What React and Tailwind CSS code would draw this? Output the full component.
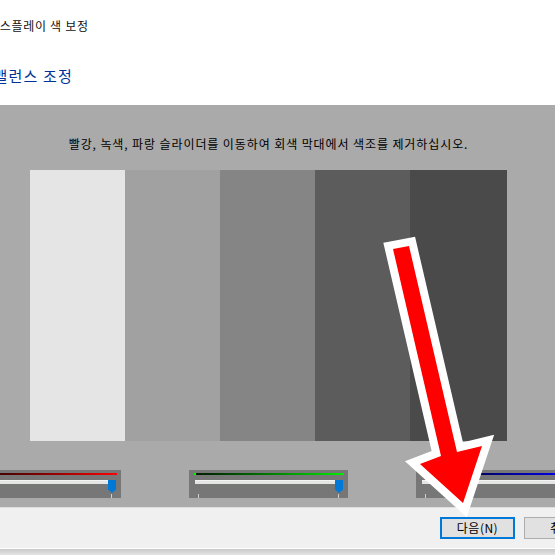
import React from 'react';

const font = "font-['Noto_Sans_CJK_KR','Noto_Sans',sans-serif]";

// one colour-channel slider: gradient strip, track with the blue thumb, tick marks
function ChannelSlider({ strip, dot }) {
  return (
    <div className="w-[159px] h-[28px] bg-[#777777] shrink-0 pt-[3px]">
      <div className={`relative ml-[5px] w-[150px] h-[2px] ${strip}`}>
        <span className={`absolute left-0 top-0 w-[2px] h-[2px] ${dot}`} />
      </div>
      <div className="relative mt-[5px] h-[13px]">
        <div className="ml-[6px] mt-[3px] w-[144px] h-[4px] bg-[#e4e6e4] border-t border-[#f4f4f4]" />
        <svg className="absolute left-[146px] top-0" width="8" height="13" viewBox="0 0 8 13">
          <path d="M0 0H8V9.5L4 13L0 9.5Z" fill="#0078d7" />
        </svg>
      </div>
      <div className="ml-[9px] mt-[1px] w-[141px] h-[4px] flex justify-between">
        <span className="w-px h-full bg-[#cfcfcf]" />
        <span className="w-px h-full bg-[#cfcfcf]" />
      </div>
    </div>
  );
}

const bars = [
  { w: 'w-[95px]', c: 'bg-[#e5e5e5]' },
  { w: 'w-[95px]', c: 'bg-[#a1a1a1]' },
  { w: 'w-[95px]', c: 'bg-[#858585]' },
  { w: 'w-[95px]', c: 'bg-[#5c5c5c]' },
  { w: 'w-[97px]', c: 'bg-[#4a4a4a]' },
];

export default function App() {
  return (
    <div className={`relative w-[555px] h-[555px] overflow-hidden bg-white ${font}`}>
      {/* Header */}
      <div className="h-[105px] pt-[18px]">
        <div className="ml-[-12px] text-[12px] leading-[16px] tracking-[0.7px] text-[#111] whitespace-nowrap">
          디스플레이 색 보정
        </div>
        <div className="ml-[-26px] mt-[32px] text-[15px] leading-[20px] tracking-[1.2px] text-[#003399] whitespace-nowrap">
          색 밸런스 조정
        </div>
      </div>

      {/* Gray calibration area */}
      <div className="h-[402px] bg-[#aaaaaa]">
        <div className="w-[537px] flex flex-col items-center pt-[31px]">
          <p className="text-[12px] leading-[16px] tracking-[0.9px] text-black whitespace-nowrap">
            빨강, 녹색, 파랑 슬라이더를 이동하여 회색 막대에서 색조를 제거하십시오.
          </p>
          <div className="flex mt-[18px] h-[271px]">
            {bars.map((b, i) => (
              <div key={i} className={`${b.w} ${b.c} h-full`} />
            ))}
          </div>
          <div className="flex gap-[68px] mt-[29px]">
            <ChannelSlider strip="bg-linear-to-r from-[#1a0000] to-[#ff0000]" dot="bg-[#ff0000]" />
            <ChannelSlider strip="bg-linear-to-r from-[#001a00] to-[#00ee00]" dot="bg-[#00ff00]" />
            <ChannelSlider strip="bg-linear-to-r from-[#00001a] to-[#0000ff]" dot="bg-[#0000ff]" />
          </div>
        </div>
      </div>

      {/* Footer with buttons */}
      <div className="h-px bg-[#dedede]" />
      <div className="h-[40px] bg-[#f0f0f0] flex gap-[9px] pl-[440px] pt-[9px] whitespace-nowrap">
        <button className="w-[75px] h-[22px] shrink-0 bg-[#e1e1e1] border-2 border-[#0078d7] text-[12px] leading-[16px] tracking-[0.5px] text-black">
          다음(N)
        </button>
        <button className="w-[75px] h-[22px] shrink-0 bg-[#e1e1e1] border border-[#adadad] text-[12px] leading-[16px] tracking-[0.5px] text-black">
          취소
        </button>
      </div>
      <div className="h-px bg-white" />
      <div className="h-[6px] bg-linear-to-b from-[#c9c9c9] to-[#e4e4e4]" />

      {/* Red annotation arrow */}
      <svg className="absolute left-0 top-0 pointer-events-none" width="555" height="555" viewBox="0 0 555 555">
        <polygon
          points="393,249 409,246 457,452 482,446 463,503 420,464 441,456"
          fill="#ff0000"
          stroke="#ffffff"
          strokeWidth="16"
          strokeLinejoin="miter"
          strokeMiterlimit="10"
          paintOrder="stroke"
        />
      </svg>
    </div>
  );
}
